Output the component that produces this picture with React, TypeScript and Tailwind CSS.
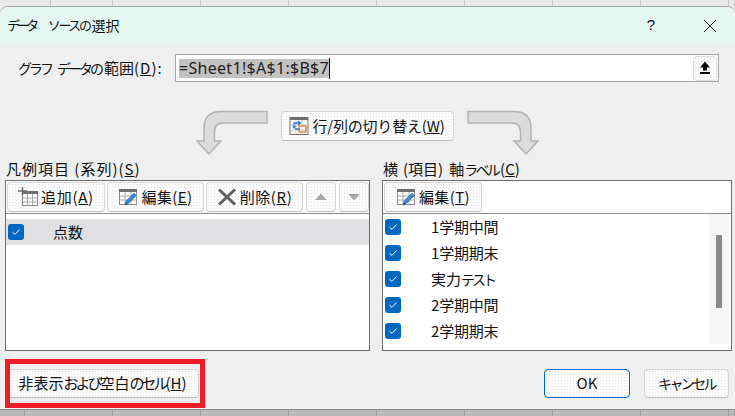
import type { ReactNode } from "react";

const font = "font-['Noto_Sans_CJK_JP','Liberation_Sans',sans-serif]";

// the dialog buttons have a faint dotted fill in the picture
const Btn = ({ className = "", children }: { className?: string; children: ReactNode }) => (
  <div
    className={`flex items-center justify-center rounded-[4px] border bg-[#fcfcfc] bg-[radial-gradient(#e4e4e4_0.6px,transparent_0.7px)] bg-[size:3px_3px] text-[#111] ${className}`}
  >
    {children}
  </div>
);

const plain = "border-[#d4d4d4] border-b-[#bcbcbc]";

// kana are set much narrower than kanji in the dialog font
const Kana = ({ className = "tracking-[-3px]", children }: { className?: string; children: ReactNode }) => (
  <span className={`text-[14px] ${className}`}>{children}</span>
);

const Check = () => (
  <div className="flex h-[16px] w-[16px] shrink-0 items-center justify-center rounded-[3px] bg-[#0067c0]">
    <svg width="10" height="8" viewBox="0 0 10 8" fill="none">
      <path d="M1.5 4.2 L4 6.4 L8.5 1.6" stroke="#fff" strokeWidth="1" />
    </svg>
  </div>
);

const TableIcon = ({ children }: { children?: ReactNode }) => (
  <svg width="20" height="20" viewBox="0 0 20 20" fill="none" className="shrink-0">
    <rect x="1.5" y="3.5" width="17" height="14" fill="#fff" stroke="#8a8a8a" />
    <rect x="1" y="2" width="18" height="3" fill="#6e6e6e" />
    <path d="M1.5 9H18.5M1.5 13H18.5M7 5V17.5M13 5V17.5" stroke="#a8a8a8" />
    {children}
  </svg>
);

const EditIcon = () => (
  <TableIcon>
    <path d="M7 17.5 L8 14 L16 6 L18.5 8.5 L10.5 16.5 Z" fill="#3a86cf" stroke="#2b6cab" strokeWidth="0.5" />
    <path d="M7 18.5 L8 15.5 L9.8 17.2 Z" fill="#1f4e7c" />
  </TableIcon>
);

const AddIcon = () => (
  <svg width="20" height="20" viewBox="0 0 20 20" fill="none" className="shrink-0">
    <rect x="4.5" y="4.5" width="15" height="14" fill="#fff" stroke="#8a8a8a" />
    <rect x="4" y="4" width="16" height="3" fill="#6e6e6e" />
    <path d="M4.5 11H19.5M4.5 15H19.5M9.5 7V18.5M14.5 7V18.5" stroke="#a8a8a8" />
    <path d="M0 4H9M4.5 0V8" stroke="#6e6e6e" strokeWidth="1.5" />
  </svg>
);

const BendArrow = ({ flip }: { flip?: boolean }) => (
  <svg width="72" height="46" viewBox="0 0 72 46" className={flip ? "-scale-x-100" : ""}>
    <path
      d="M71 1.5 H25 Q8 1.5 8 18 V31 H1 L13 44 L25 31 H18.5 V22 Q18.5 13 27 13 H71 Z"
      fill="#dcdcdc"
      stroke="#b2b2b2"
      strokeWidth="1.5"
    />
  </svg>
);

const Triangle = ({ down }: { down?: boolean }) => (
  <svg width="12" height="8" viewBox="0 0 12 8">
    <path d={down ? "M0 1 H12 L6 7.5 Z" : "M0 7 H12 L6 0.5 Z"} fill="#a9a9a9" />
  </svg>
);

const categories: ReactNode[] = [
  <span className="tracking-[-0.2px]">1学期中間</span>,
  <span className="tracking-[-0.2px]">1学期期末</span>,
  <span>
    実力<Kana>テスト</Kana>
  </span>,
  <span className="tracking-[-0.2px]">2学期中間</span>,
  <span className="tracking-[-0.2px]">2学期期末</span>,
];

const gridTop = [51, 62, 88, 88, 88, 88, 88, 88, 88, 6];
const gridBottom = [25, 88, 88, 88, 88, 88, 88, 88, 88, 6];

export default function App() {
  return (
    <div className={`flex h-[416px] w-[735px] flex-col overflow-hidden bg-[#e9e9e9] text-[15px] text-[#111] ${font}`}>
      {/* sheet behind the dialog */}
      <div className="flex h-[6px] shrink-0">
        {gridTop.map((w, i) => (
          <div key={i} style={{ width: w }} className="border-r border-[#c8c8c8]" />
        ))}
      </div>

      <div className="flex h-[403px] shrink-0 flex-col rounded-t-[8px] border-t border-[#a9a9a9] bg-[#efefef]">
        <div className="flex h-[37px] shrink-0 items-center justify-between rounded-t-[8px] bg-[#e4f7f1] pl-[7px]">
          <span className="flex items-center pb-px text-[14px]">
            <span className="text-[13px] tracking-[-3.4px]">データ</span>
            <span className="ml-[12px] text-[13px] tracking-[-2.4px]">ソースの</span>
            <span className="ml-[2px]">選択</span>
          </span>
          <div className="flex items-center">
            <span className="mr-[48px] font-['Liberation_Sans',sans-serif] text-[15px]">?</span>
            <svg width="14" height="14" viewBox="0 0 14 14" className="mr-[18px]">
              <path d="M1 1 L13 13 M13 1 L1 13" stroke="#111" strokeWidth="1" fill="none" />
            </svg>
          </div>
        </div>

        <div className="mt-[10px] flex h-[28px] shrink-0 items-center pl-[18px]">
          <label className="flex w-[157px] shrink-0 items-center">
            <Kana>グラフ</Kana>
            <Kana className="ml-[6px] tracking-[-3px]">データの</Kana>
            <span className="ml-[3px]">範囲</span>
            <span className="tracking-[1px]">
              (<u>D</u>):
            </span>
          </label>
          <div className="flex h-[28px] w-[544px] items-center justify-between border border-[#a6a6ae] bg-white pl-[3px] pr-px">
            <div className="flex items-center">
              <span className="flex h-[19px] items-center bg-[#c2c2c2] font-['Noto_Sans',sans-serif] text-[16px] tracking-[0.3px] text-[#222]">
                =Sheet1!$A$1:$B$7
              </span>
              <span className="h-[21px] w-px bg-black" />
            </div>
            <Btn className="h-[25px] w-[24px] border-[#dcdcdc]">
              <svg width="12" height="14" viewBox="0 0 12 14">
                <path d="M6 0.5 L11 6.5 H8 V9.5 H4 V6.5 H1 Z M1 11 H11 V13 H1 Z" fill="#000" />
              </svg>
            </Btn>
          </div>
        </div>

        <div className="mt-[28px] flex h-[46px] shrink-0 justify-center gap-[13px] pr-px">
          <BendArrow />
          <Btn className={`mt-px h-[30px] w-[173px] gap-[3px] ${plain}`}>
            <svg width="20" height="20" viewBox="0 0 20 20" fill="none">
              <rect x="1" y="1.5" width="18" height="17" fill="#fff" stroke="#6e6e6e" />
              <rect x="1" y="1" width="18" height="3" fill="#6e6e6e" />
              <path d="M1.5 9H18.5M1.5 14H18.5M7 4V18M13 4V18" stroke="#c8c8c8" />
              <rect x="10" y="10" width="7" height="6" stroke="#d9822b" strokeWidth="1.3" />
              <path d="M5 11 V7 H11 M9 5 L11.5 7 L9 9 M4 10 L5 12 L7 10 M11 13 H6" stroke="#2f7fd0" strokeWidth="1.3" />
            </svg>
            <span className="tracking-[-0.2px]">
              行/列の切り替え(<u>W</u>)
            </span>
          </Btn>
          <BendArrow flip />
        </div>

        <div className="mt-[4px] flex shrink-0 pl-[5px]">
          <section className="w-[365px] shrink-0">
            <div className="flex h-[20px] items-center pb-[2px] pl-px tracking-[1px]">
              凡例項目 (系列)(<u>S</u>)
            </div>
            <div className="flex h-[171px] flex-col border border-[#6e6e6e] bg-white">
              <div className="flex h-[33px] shrink-0 items-center gap-[2px] border-b border-[#8a8a8a] pl-px">
                <Btn className={`h-[30px] w-[98px] gap-[3px] ${plain}`}>
                  <AddIcon />
                  <span className="tracking-[0.7px]">
                    追加(<u>A</u>)
                  </span>
                </Btn>
                <Btn className={`h-[30px] w-[97px] gap-[3px] ${plain}`}>
                  <EditIcon />
                  <span className="tracking-[0.4px]">
                    編集(<u>E</u>)
                  </span>
                </Btn>
                <Btn className={`h-[30px] w-[97px] gap-[3px] ${plain}`}>
                  <svg width="20" height="18" viewBox="0 0 20 18">
                    <path d="M2 1.5 L18 16.5 M18 1.5 L2 16.5" stroke="#5f5f5f" strokeWidth="3" fill="none" />
                  </svg>
                  <span className="tracking-[0.6px]">
                    削除(<u>R</u>)
                  </span>
                </Btn>
                <Btn className={`ml-px h-[30px] w-[30px] ${plain}`}>
                  <Triangle />
                </Btn>
                <Btn className={`ml-px h-[30px] w-[30px] ${plain}`}>
                  <Triangle down />
                </Btn>
              </div>
              <div className="mt-[5px] flex h-[26px] items-center bg-[#e0e0e2] pl-[2px]">
                <Check />
                <span className="ml-[29px]">点数</span>
              </div>
            </div>
          </section>

          <section className="ml-[12px] w-[350px] shrink-0">
            <div className="flex h-[20px] items-center pb-[2px] pl-px">
              <span>横</span>
              <span className="ml-[5px]">(項目)</span>
              <span className="ml-[6px]">軸</span>
              <Kana className="tracking-[-2.7px]">ラベル</Kana>
              <span className="ml-[2px]">
                (<u>C</u>)
              </span>
            </div>
            <div className="flex h-[171px] flex-col border border-[#6e6e6e] bg-white">
              <div className="flex h-[33px] shrink-0 items-center border-b border-[#8a8a8a] pl-[1px]">
                <Btn className={`h-[30px] w-[98px] gap-[3px] ${plain}`}>
                  <EditIcon />
                  <span className="tracking-[0.4px]">
                    編集(<u>T</u>)
                  </span>
                </Btn>
              </div>
              <div className="flex min-h-0 flex-1">
                <div className="flex-1 pl-[2px]">
                  {categories.map((c, i) => (
                    <div key={i} className="flex h-[26px] items-center">
                      <Check />
                      <span className="ml-[30px]">{c}</span>
                    </div>
                  ))}
                </div>
                <div className="mb-[6px] mr-[2px] w-[20px] bg-[#f6f6f6] pl-[7px] pt-[21px]">
                  <div className="h-[73px] w-[6px] bg-[#8a8a8a]" />
                </div>
              </div>
            </div>
          </section>
        </div>

        <div className="mt-[8px] flex shrink-0 items-start pl-[5px]">
          <div className="h-[49px] w-[200px] shrink-0 overflow-hidden border-[5px] border-[#ee1c25] pt-[5px]">
            <Btn className={`-ml-[4px] h-[29px] w-[193px] ${plain}`}>
              <span className="flex items-center">
                非表示
                <span className="tracking-[-3px]">および</span>
                空白
                <span className="tracking-[-3px]">のセル</span>
                <span>
                  (<u>H</u>)
                </span>
              </span>
            </Btn>
          </div>
          <Btn className="ml-[339px] mt-[10px] h-[29px] w-[86px] border-[#0067c0]">OK</Btn>
          <Btn className={`ml-[14px] mt-[10px] h-[29px] w-[85px] ${plain}`}>
            <Kana className="tracking-[-2.6px]">キャンセル</Kana>
          </Btn>
        </div>
      </div>

      <div className="flex flex-1 border-t border-[#8f8f8f] bg-[#b9b9b9]">
        {gridBottom.map((w, i) => (
          <div key={i} style={{ width: w }} className="border-r border-[#9a9a9a]" />
        ))}
      </div>
    </div>
  );
}
